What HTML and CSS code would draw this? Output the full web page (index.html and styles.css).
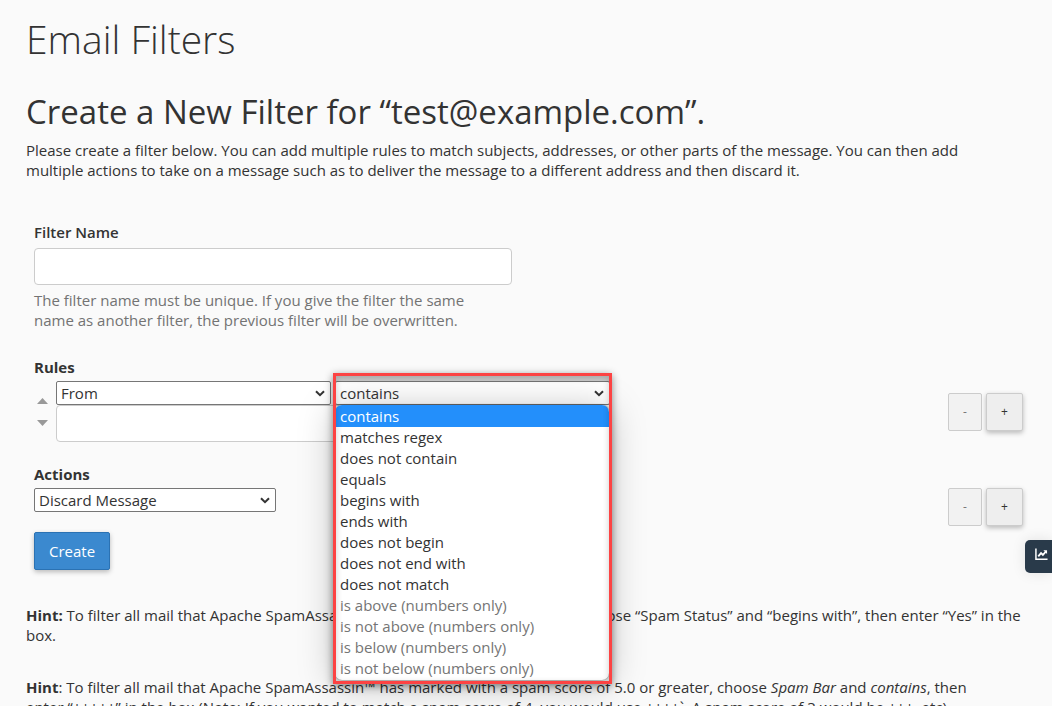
FILE: index.html
```
<!DOCTYPE html>
<html lang="en">
<head>
    <meta charset="UTF-8">
    <meta name="viewport" content="width=device-width, initial-scale=1.0">
    <title>Email Filters</title>
    <link rel="stylesheet" href="styles.css">
</head>
<body>
    <main class="page">
        <h1 class="page-title">Email Filters</h1>
        <h2 class="section-title">Create a New Filter for “test@example.com”.</h2>
        <p class="intro">Please create a filter below. You can add multiple rules to match subjects, addresses, or other parts of the message. You can then add multiple actions to take on a message such as to deliver the message to a different address and then discard it.</p>

        <form class="filter-form">
            <div class="form-group">
                <label class="form-label name-label" for="filtername">Filter Name</label>
                <input class="text-input" type="text" id="filtername" name="filtername">
                <p class="help">The filter name must be unique. If you give the filter the same name as another filter, the previous filter will be overwritten.</p>
            </div>

            <div class="form-group rules">
                <label class="form-label" for="part1">Rules</label>
                <div class="row">
                    <div class="sorter">
                        <button type="button" class="sort-btn" aria-label="Move up">
                            <svg width="11" height="6" viewBox="0 0 11 6"><path d="M5.5 0L11 6H0z" fill="#999"/></svg>
                        </button>
                        <button type="button" class="sort-btn" aria-label="Move down">
                            <svg width="11" height="6" viewBox="0 0 11 6"><path d="M0 0h11L5.5 6z" fill="#999"/></svg>
                        </button>
                    </div>
                    <div class="rule">
                        <div class="rule-selects">
                            <div class="select-wrap">
                                <select class="select" id="part1" name="part1">
                                    <option>From</option>
                                </select>
                                <svg class="chevron" width="10" height="7" viewBox="0 0 10 7"><path d="M1 1.2l4 4 4-4" fill="none" stroke="#333" stroke-width="2"/></svg>
                            </div>
                            <div class="select-wrap">
                                <select class="select" id="match1" name="match1" aria-label="Match type">
                                    <option>contains</option>
                                </select>
                                <svg class="chevron" width="10" height="7" viewBox="0 0 10 7"><path d="M1 1.2l4 4 4-4" fill="none" stroke="#333" stroke-width="2"/></svg>
                                <ul class="options" role="listbox" aria-label="Match type">
                                    <li class="option selected" role="option" aria-selected="true">contains</li>
                                    <li class="option" role="option">matches regex</li>
                                    <li class="option" role="option">does not contain</li>
                                    <li class="option" role="option">equals</li>
                                    <li class="option" role="option">begins with</li>
                                    <li class="option" role="option">ends with</li>
                                    <li class="option" role="option">does not begin</li>
                                    <li class="option" role="option">does not end with</li>
                                    <li class="option" role="option">does not match</li>
                                    <li class="option disabled" role="option" aria-disabled="true">is above (numbers only)</li>
                                    <li class="option disabled" role="option" aria-disabled="true">is not above (numbers only)</li>
                                    <li class="option disabled" role="option" aria-disabled="true">is below (numbers only)</li>
                                    <li class="option disabled" role="option" aria-disabled="true">is not below (numbers only)</li>
                                </ul>
                                <div class="highlight"></div>
                            </div>
                        </div>
                        <input class="text-input" type="text" id="val1" name="val1" aria-label="Rule value">
                    </div>
                    <div class="row-buttons">
                        <button type="button" class="btn btn-minus" disabled>-</button>
                        <button type="button" class="btn btn-plus">+</button>
                    </div>
                </div>
            </div>

            <div class="form-group actions">
                <label class="form-label" for="action1">Actions</label>
                <div class="row">
                    <div class="select-wrap action-wrap">
                        <select class="select" id="action1" name="action1">
                            <option>Discard Message</option>
                        </select>
                        <svg class="chevron" width="10" height="7" viewBox="0 0 10 7"><path d="M1 1.2l4 4 4-4" fill="none" stroke="#333" stroke-width="2"/></svg>
                    </div>
                    <div class="row-buttons">
                        <button type="button" class="btn btn-minus" disabled>-</button>
                        <button type="button" class="btn btn-plus">+</button>
                    </div>
                </div>
            </div>

            <button type="submit" class="btn-create">Create</button>
        </form>

        <p class="hint"><strong>Hint:</strong> To filter all mail that Apache SpamAssassin™ has marked as spam, please choose “Spam Status” and “begins with”, then enter “Yes” in the box.</p>
        <p class="hint"><strong>Hint</strong>: To filter all mail that Apache SpamAssassin™ has marked with a spam score of 5.0 or greater, choose <em>Spam Bar</em> and <em>contains</em>, then enter “+++++” in the box (Note: If you wanted to match a spam score of 4, you would use ++++`. A spam score of 3 would be +++, etc).</p>
    </main>

    <button type="button" class="stats-tab" aria-label="Statistics">
        <svg width="13" height="13" viewBox="0 0 14 13">
            <path d="M1 0v11.5h12.5" fill="none" stroke="#fff" stroke-width="1.6"/>
            <path d="M3.5 8.5l3-3.5 2 2 3.5-4" fill="none" stroke="#fff" stroke-width="2"/>
            <path d="M9 2h4v4z" fill="#fff"/>
        </svg>
    </button>
</body>
</html>
```
FILE: styles.css
```
* {
    box-sizing: border-box;
}
body {
    margin: 0;
    height: 100vh;
    overflow: hidden;
    background-color: #fafafa;
    color: #333;
    font-family: "Open Sans", sans-serif;
    font-size: 15px;
    line-height: 20px;
}
button, input, select {
    font: inherit;
    color: inherit;
    margin: 0;
}
.page {
    padding: 17px 26px 0;
}
.page-title {
    margin: 0 0 29px;
    font-size: 39px;
    font-weight: 300;
    line-height: 44px;
}
.section-title {
    margin: 0 0 6px;
    font-size: 33px;
    font-weight: 400;
    line-height: 44px;
}
.intro {
    max-width: 980px;
    margin: 0 0 42px;
}
.filter-form {
    padding: 0 3px 0 8px;
}
.form-label {
    display: block;
    margin-bottom: 4px;
    font-weight: 700;
}
.name-label {
    margin-bottom: 6px;
    font-weight: 600;
}
.text-input {
    display: block;
    width: 100%;
    max-width: 478px;
    height: 37px;
    padding: 6px 12px;
    border: 1px solid #ccc;
    border-radius: 4px;
    background-color: #fff;
}
.help {
    max-width: 460px;
    margin: 5px 0 27px;
    color: #737373;
}
.row {
    display: flex;
}
.sorter {
    display: flex;
    flex-direction: column;
    gap: 16px;
    width: 22px;
    padding: 17px 0 0 3px;
}
.sort-btn {
    display: flex;
    width: 11px;
    padding: 0;
    border: none;
    background: none;
}
.rules {
    margin-bottom: 22px;
}
.rule-selects {
    display: flex;
    gap: 4px;
}
.select-wrap {
    position: relative;
    width: 275px;
}
.action-wrap {
    width: 242px;
}
.select {
    display: block;
    appearance: none;
    width: 100%;
    height: 24px;
    padding: 0 20px 0 4px;
    border: 1px solid #767676;
    border-radius: 2px;
    background-color: #fff;
    line-height: 20px;
}
.chevron {
    position: absolute;
    top: 9px;
    right: 6px;
    pointer-events: none;
}
.options {
    position: absolute;
    top: 24px;
    left: 0;
    z-index: 2;
    width: 274px;
    margin: 0;
    padding: 0 0 1px;
    list-style: none;
    overflow: hidden;
    border-radius: 7px;
    background-color: #fff;
    box-shadow: 0 0 2px rgba(0, 0, 0, 0.6), 0 4px 36px rgba(0, 0, 0, 0.25);
}
.option {
    padding: 0 5px;
    line-height: 21px;
}
.option.selected {
    padding-top: 1px;
    background-color: #238ffb;
    color: #fff;
}
.option.disabled {
    color: #757575;
}
/* red frame round the open list */
.highlight {
    position: absolute;
    top: -8px;
    left: -2px;
    z-index: 3;
    width: 279px;
    height: 311px;
    border: 3px solid #fc4343;
    box-shadow: 0 2px 8px rgba(0, 0, 0, 0.45), inset 0 5px 0 rgba(0, 0, 0, 0.18), inset 0 2px 6px rgba(0, 0, 0, 0.2);
    pointer-events: none;
}
.row-buttons {
    display: flex;
    align-items: flex-start;
    gap: 4px;
    margin-left: auto;
}
.rules .row-buttons {
    padding-top: 12px;
}
.btn {
    height: 38px;
    padding: 0;
    border: 1px solid #ccc;
    border-radius: 2px;
    background-color: #eee;
    font-size: 12px;
}
.btn-minus {
    width: 34px;
    background-color: #f2f2f2;
    color: #777;
}
.btn-plus {
    width: 37px;
    box-shadow: 0 2px 5px rgba(0, 0, 0, 0.26);
}
.btn-create {
    display: block;
    margin-top: 6px;
    height: 38px;
    padding: 0 14px;
    border: 1px solid #2b72b3;
    border-radius: 2px;
    background-color: #3b89cf;
    color: #fff;
    box-shadow: 0 2px 5px rgba(0, 0, 0, 0.26);
}
.hint {
    margin: 35px 0 32px;
}
.hint + .hint {
    max-width: 980px;
    margin-top: 0;
}
.stats-tab {
    position: fixed;
    top: 540px;
    right: 0;
    width: 27px;
    height: 33px;
    padding: 0 4px 4px 9px;
    border: none;
    border-radius: 5px 0 0 5px;
    background-color: #293a4a;
    box-shadow: 0 0 14px rgba(0, 0, 0, 0.1);
}
```
